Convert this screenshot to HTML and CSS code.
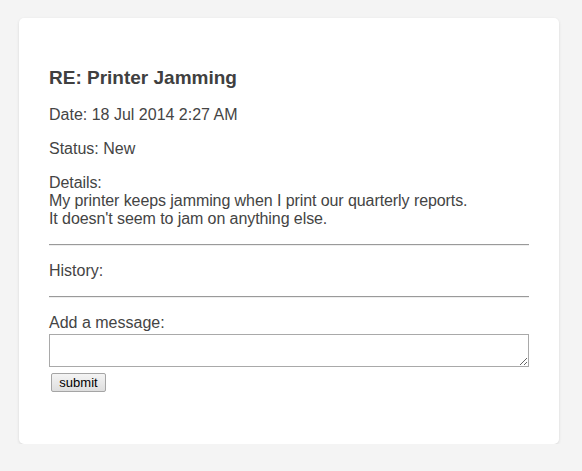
FILE: index.html
```html
<!DOCTYPE html>
<html>
<head>
<meta charset="utf-8">
<link rel="stylesheet" href="styles.css">
</head>
<body>
<div class="card">
  <h3 class="title">RE: Printer Jamming</h3>
  <p class="line">Date: 18 Jul 2014 2:27 AM</p>
  <p class="line">Status: New</p>
  <p class="line details">Details:<br>My printer keeps jamming when I print our quarterly reports.<br>It doesn't seem to jam on anything else.</p>
  <hr class="rule">
  <p class="line">History:</p>
  <hr class="rule">
  <form class="reply">
    <label class="label" for="msg">Add a message:</label>
    <textarea id="msg" class="message"></textarea>
    <button type="button" class="submit">submit</button>
  </form>
</div>
</body>
</html>
```

FILE: styles.css
```css
html, body {
  margin: 0;
  padding: 0;
  background: #f4f4f4;
}
body {
  font-family: "Liberation Sans", Arial, sans-serif;
  font-size: 16px;
  color: #444;
  padding: 18px 0 0 19px;
}
.card {
  width: 480px;
  padding: 30px 30px 52px;
  background: #fff;
  border-radius: 5px;
  box-shadow: 0 1px 3px rgba(0,0,0,0.12);
}
.title {
  font-size: 19px;
  font-weight: bold;
  margin: 19px 0 17px;
  color: #404040;
}
.line {
  margin: 16px 0;
}
.details {
  letter-spacing: -0.08px;
}
.rule {
  border: 0;
  border-top: 1px solid #9a9a9a;
  border-bottom: 1px solid #eee;
  height: 0;
  margin: 16px 0;
}
.reply {
  margin: 16px 0 0;
}
.label {
  display: block;
  margin-top: 15px;
  line-height: 18px;
}
.message {
  display: block;
  box-sizing: border-box;
  width: 480px;
  height: 33px;
  margin: 2px 0 0;
  border: 1px solid #a9a9a9;
  padding: 2px;
  resize: vertical;
}
.submit {
  display: block;
  margin: 6px 0 0 2px;
  width: 55px;
  height: 19px;
  padding: 0;
  font-family: "Liberation Sans", Arial, sans-serif;
  font-size: 13px;
  color: #000;
  background: linear-gradient(#f4f4f4, #dedede);
  border: 1px solid #a5a5a5;
  border-radius: 2px;
}
```
